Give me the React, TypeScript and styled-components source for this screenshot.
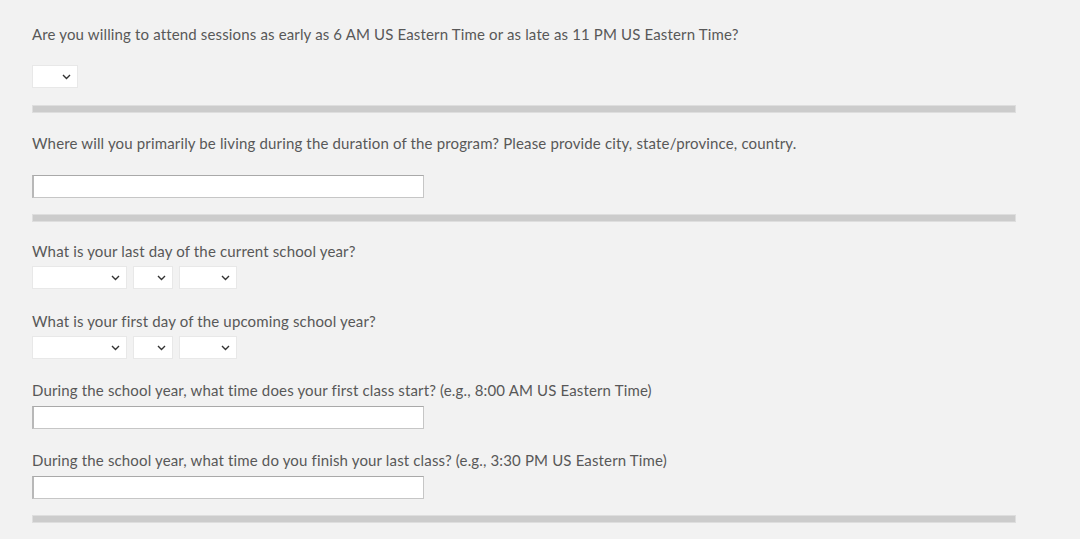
import React from 'react'
import styled, { createGlobalStyle } from 'styled-components'

const GlobalStyle = createGlobalStyle`
	html, body {
		margin: 0;
		padding: 0;
		background: #f2f2f2;
	}
	body {
		font-family: Lato, "Open Sans", sans-serif;
		color: #585858;
	}
`

const Form = styled.div`
	width: 984px;
	padding: 24px 0 0 32px;
`

const Question = styled.p<{ $gap: number }>`
	margin: 0 0 ${(p) => p.$gap}px;
	font-size: 15px;
	line-height: 20px;
	letter-spacing: 0.15px;
`

const Field = styled.div<{ $after: number }>`
	margin-bottom: ${(p) => p.$after}px;
`

const Divider = styled.div<{ $after: number }>`
	height: 6px;
	background: #cccccc;
	border: 1px solid #dedede;
	margin-bottom: ${(p) => p.$after}px;
`

const DateRow = styled.div`
	display: flex;
	gap: 6px;
`

const SelectBox = styled.div<{ $width: number }>`
	box-sizing: border-box;
	width: ${(p) => p.$width}px;
	height: 23px;
	background: #ffffff;
	border: 1px solid #e8e8e8;
	display: flex;
	align-items: center;
	justify-content: flex-end;
	padding-right: 6px;
	color: #333333;
`

const TextBox = styled.input`
	display: block;
	box-sizing: border-box;
	width: 392px;
	height: 23px;
	margin: 0;
	background: #ffffff;
	border: 1px solid #c6c6c6;
	border-top-color: #a9a9a9;
	border-left: 2px solid #b8b8b8;
	outline: none;
`

function Chevron() {
	return (
		<svg width="9" height="6" viewBox="0 0 9 6">
			<path d="M1 1l3.5 3.5L8 1" fill="none" stroke="currentColor" strokeWidth="1.4" />
		</svg>
	)
}

function Select({ width }: { width: number }) {
	return (
		<SelectBox $width={width}>
			<Chevron />
		</SelectBox>
	)
}

function DatePicker() {
	return (
		<DateRow>
			<Select width={95} />
			<Select width={40} />
			<Select width={58} />
		</DateRow>
	)
}

export default function App() {
	return (
		<>
			<GlobalStyle />
			<Form>
				<Question $gap={21}>
					Are you willing to attend sessions as early as 6 AM US Eastern Time or as late as 11 PM US Eastern Time?
				</Question>
				<Field $after={17}>
					<Select width={46} />
				</Field>
				<Divider $after={20} />

				<Question $gap={22}>
					Where will you primarily be living during the duration of the program? Please provide city, state/province, country.
				</Question>
				<Field $after={16}>
					<TextBox type="text" />
				</Field>
				<Divider $after={19} />

				<Question $gap={5}>What is your last day of the current school year?</Question>
				<Field $after={22}>
					<DatePicker />
				</Field>

				<Question $gap={5}>What is your first day of the upcoming school year?</Question>
				<Field $after={21}>
					<DatePicker />
				</Field>

				<Question $gap={6}>
					During the school year, what time does your first class start? (e.g., 8:00 AM US Eastern Time)
				</Question>
				<Field $after={21}>
					<TextBox type="text" />
				</Field>

				<Question $gap={6}>
					During the school year, what time do you finish your last class? (e.g., 3:30 PM US Eastern Time)
				</Question>
				<Field $after={16}>
					<TextBox type="text" />
				</Field>
				<Divider $after={16} />
			</Form>
		</>
	)
}
